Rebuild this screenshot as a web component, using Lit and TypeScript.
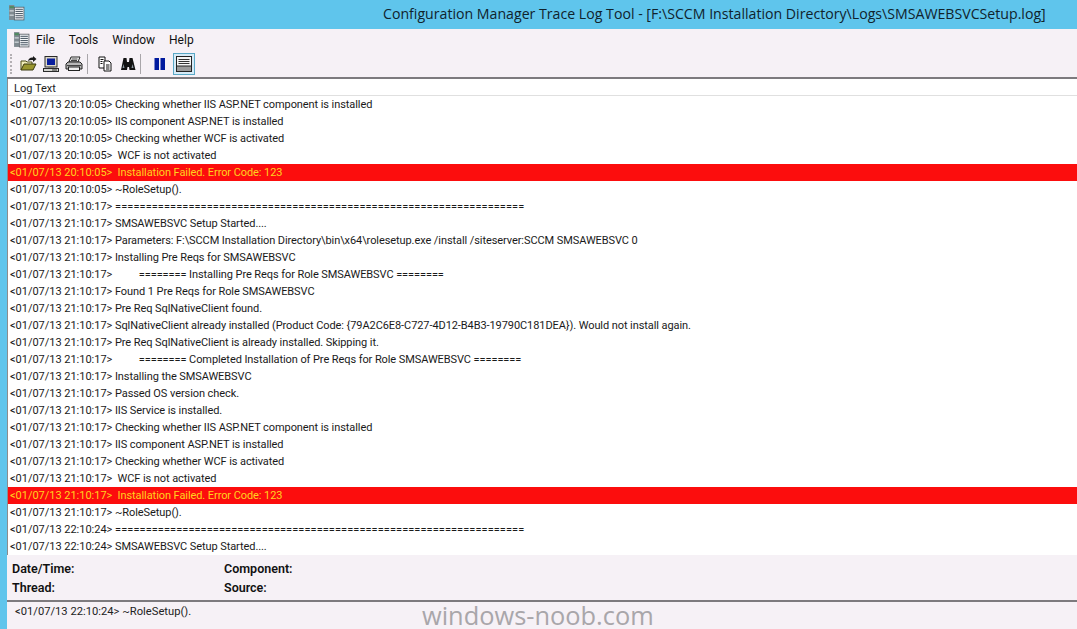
import { LitElement, html, css, svg } from "lit";
import { customElement } from "lit/decorators.js";

const d1 = "<01/07/13 20:10:05>";
const d2 = "<01/07/13 21:10:17>";
const d3 = "<01/07/13 22:10:24>";
const eq = "=".repeat(67);
const pad = " ".repeat(10);
const rows: [string, string, boolean?][] = [
  [d1, " Checking whether IIS ASP.NET component is installed"],
  [d1, " IIS component ASP.NET is installed"],
  [d1, " Checking whether WCF is activated"],
  [d1, "  WCF is not activated"],
  [d1, "  Installation Failed. Error Code: 123", true],
  [d1, " ~RoleSetup()."],
  [d2, " " + eq],
  [d2, " SMSAWEBSVC Setup Started...."],
  [d2, " Parameters: F:\\SCCM Installation Directory\\bin\\x64\\rolesetup.exe /install /siteserver:SCCM SMSAWEBSVC 0"],
  [d2, " Installing Pre Reqs for SMSAWEBSVC"],
  [d2, pad + "======== Installing Pre Reqs for Role SMSAWEBSVC ========"],
  [d2, " Found 1 Pre Reqs for Role SMSAWEBSVC"],
  [d2, " Pre Req SqlNativeClient found."],
  [d2, " SqlNativeClient already installed (Product Code: {79A2C6E8-C727-4D12-B4B3-19790C181DEA}). Would not install again."],
  [d2, " Pre Req SqlNativeClient is already installed. Skipping it."],
  [d2, pad + "======== Completed Installation of Pre Reqs for Role SMSAWEBSVC ========"],
  [d2, " Installing the SMSAWEBSVC"],
  [d2, " Passed OS version check."],
  [d2, " IIS Service is installed."],
  [d2, " Checking whether IIS ASP.NET component is installed"],
  [d2, " IIS component ASP.NET is installed"],
  [d2, " Checking whether WCF is activated"],
  [d2, "  WCF is not activated"],
  [d2, "  Installation Failed. Error Code: 123", true],
  [d2, " ~RoleSetup()."],
  [d3, " " + eq],
  [d3, " SMSAWEBSVC Setup Started...."],
];

const appIcon = (cls: string) => html`<svg class=${cls} viewBox="0 0 16 16">
  <rect x="1" y="1" width="5" height="14" fill="#7f8a90"/>
  <rect x="1.500" y="2" width="4" height="2" fill="#4f8a5f"/>
  <rect x="1.500" y="6" width="4" height="1" fill="#dfe4e8"/>
  <rect x="1.500" y="10" width="4" height="1" fill="#dfe4e8"/>
  <rect x="6" y="3" width="9" height="12" fill="#f4f7f9" stroke="#5b6066" stroke-width=".8"/>
  ${[5, 7, 9, 11, 13].map((y) => svg`<line x1="7" x2="14" y1=${y} y2=${y} stroke="#4d5a66" stroke-width="1"/>`)}
</svg>`;

@customElement("app-root")
export class AppRoot extends LitElement {
  static styles = css`
    :host { display: block; width: 1077px; height: 629px; overflow: hidden; position: relative; background: #5fc5ec; font-family: Roboto, sans-serif; }
    .title { height: 29px; display: flex; align-items: center; position: relative; }
    .title .ico { width: 17px; height: 17px; margin: 0 0 4px 8px; }
    .title .t { position: absolute; left: 383px; top: 3px; font: 14.15px/22px "Open Sans", sans-serif; color: #10232c; white-space: nowrap; }
    .win { margin-left: 7px; height: 600px; background: #f6f1f6; display: flex; flex-direction: column; }
    .menu { height: 21px; display: flex; align-items: center; flex: none; font-size: 12px; color: #111; }
    .menu .ico { width: 17px; height: 17px; margin-left: 6px; margin-right: 6px; }
    .menu span { margin-right: 14px; }
    .tb { height: 27px; flex: none; display: flex; align-items: center; padding-left: 3px; border-bottom: 2px solid #7d7a7e; }
    .grip { width: 1px; height: 20px; margin-right: 3px; border-left: 2px dotted #b4b0b4; }
    .b { width: 23px; height: 22px; display: flex; align-items: center; justify-content: center; flex: none; }
    .b svg { width: 18px; height: 18px; }
    .sep { width: 1px; height: 20px; background: #a9a6aa; flex: none; }
    .s1 { margin: 0 5px 0 2px; }
    .s2 { margin: 0 7px 0 1px; }
    .b.on { background: #d6ebf7; outline: 1px solid #5aa8c6; outline-offset: -1px; width: 22px; margin-left: 2px; }
    .list { background: #fff; height: 476px; flex: none; display: flex; flex-direction: column; border-left: 1px solid #8c8c8c; box-sizing: border-box; }
    .head { height: 17px; flex: none; font-size: 11px; line-height: 19px; padding-left: 6px; border-bottom: 1px solid #e0e0e0; box-sizing: border-box; color: #222; }
    .row { height: 17px; flex: none; font-size: 11px; letter-spacing: -0.02px; line-height: 17px; padding-left: 2px; color: #1a1a1a; white-space: pre; }
    .row.err { background: #fc0d0d; color: #ffd21e; }
    .row .txt { letter-spacing: -0.08px; }
    .row .rule { letter-spacing: 0.07px; }
    .det { height: 47px; flex: none; display: grid; grid-template-columns: 212px 1fr; grid-auto-rows: 19px; align-content: end; padding: 0 0 3px 5px; font-size: 12.5px; color: #111; border-bottom: 2px solid #7d7a7e; box-sizing: border-box; }
    .det div { line-height: 19px; font-weight: 600; }
    .msg { flex: 1; position: relative; font-size: 11.2px; color: #222; padding: 3px 0 0 8px; white-space: pre; }
    .wm { position: absolute; left: 415px; top: 1px; font: 25.4px/24px "Open Sans", sans-serif; color: #a9a6aa; }
  `;

  render() {
    return html`
      <div class="title">${appIcon("ico")}<div class="t">Configuration Manager Trace Log Tool - [F:\\SCCM Installation Directory\\Logs\\SMSAWEBSVCSetup.log]</div></div>
      <div class="win">
        <div class="menu">${appIcon("ico")}<span>File</span><span>Tools</span><span>Window</span><span>Help</span></div>
        <div class="tb">
          <div class="grip"></div>
          <div class="b"><svg viewBox="0 0 18 18"><path d="M2 15V6h5l1 1h5v2" fill="#f3eebc" stroke="#4a4a14"/><path d="M2 15l3-6h12l-3 6z" fill="#9a9630" stroke="#3a3a10"/><path d="M9 6q1-4 5-3.500V1l3.500 3L14 7V5q-3-.5-5 1z" fill="#1a1a1a"/></svg></div>
          <div class="b"><svg viewBox="0 0 18 18"><rect x="3" y="1.500" width="12" height="10.500" fill="#dcd8c8" stroke="#2a2a2a"/><rect x="5" y="3.500" width="8" height="6.500" fill="#0a1f9e"/><rect x="6" y="12" width="6" height="1.500" fill="#777"/><rect x="1.500" y="13.500" width="15" height="3" fill="#d4d4d0" stroke="#2a2a2a"/><line x1="10" x2="15" y1="15" y2="15" stroke="#333"/></svg></div>
          <div class="b"><svg viewBox="0 0 18 18"><path d="M6 2h9l-2 5H4z" fill="#fbfbfb" stroke="#222"/><path d="M6.500 4h6M6 5.500h6" stroke="#444"/><path d="M3 7h12l2 2v5H1V9z" fill="#b8b8b8" stroke="#222"/><path d="M2 10.500h14" stroke="#444"/><rect x="3.500" y="12" width="11" height="3.500" fill="#eee" stroke="#222"/></svg></div>
          <div class="sep s1"></div>
          <div class="b"><svg viewBox="0 0 18 18"><path d="M3 2h6v11H3z" fill="#fff" stroke="#111"/><path d="M8 6h5l2 2v8H8z" fill="#fff" stroke="#111"/><path d="M10 10h3.500M10 12h3.500M10 14h3.500M4.500 4.500h3M4.500 6.500h2M4.500 8.500h2" stroke="#111"/></svg></div>
          <div class="b"><svg viewBox="0 0 18 18"><path d="M4.500 3h3l.5 4h2l.5-4h3l3 12h-6l-.5-3h-1.500l-.5 3h-6z" fill="#111"/><path d="M4.500 9l-1 4h2zM13.500 9l1 4h-2z" fill="#8a96a0"/></svg></div>
          <div class="sep s2"></div>
          <div class="b"><svg viewBox="0 0 18 18"><rect x="3.500" y="3" width="4.500" height="12" fill="#001a9e"/><rect x="9.500" y="3" width="4.500" height="12" fill="#001a9e"/></svg></div>
          <div class="b on"><svg viewBox="0 0 18 18"><rect x="1.500" y="1.500" width="15" height="15" fill="#f6f6f6" stroke="#222"/><path d="M3.500 4.500h11M3.500 6.500h11M3.500 8.500h11" stroke="#333"/><rect x="2" y="11" width="14" height="5" fill="#9a9a9a"/><line x1="2" x2="16" y1="11" y2="11" stroke="#222"/></svg></div>
        </div>
        <div class="list">
          <div class="head">Log Text</div>
          ${rows.map(([d, t, e]) => html`<div class="row ${e ? "err" : ""}">${d}<span class=${t === " " + eq ? "rule" : "txt"}>${t}</span></div>`)}
        </div>
        <div class="det">
          <div>Date/Time:</div><div>Component:</div>
          <div>Thread:</div><div>Source:</div>
        </div>
        <div class="msg">${d3} ~RoleSetup().<div class="wm">windows-noob.com</div></div>
      </div>
    `;
  }
}
